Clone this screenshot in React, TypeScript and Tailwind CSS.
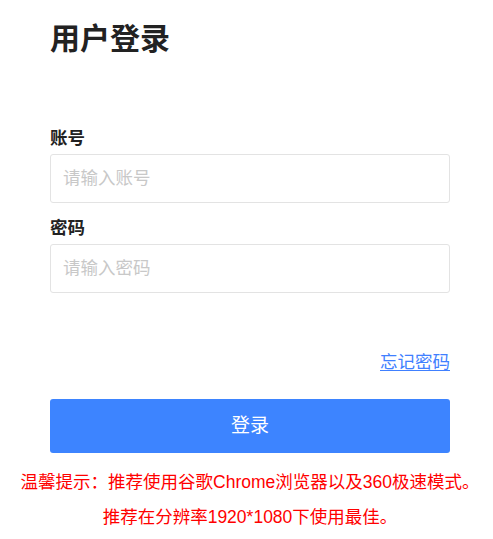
import React from "react";

const font = "font-['Liberation_Sans','Noto_Sans_CJK_SC',sans-serif]";

const App: React.FC = () => {
  return (
    <div className={`w-[493px] h-[539px] bg-white overflow-hidden ${font}`}>
      <div className="ml-[50px] w-[400px] pt-[19px]">
        <h1 className="text-[30px] leading-[40px] font-bold text-[#222]">用户登录</h1>

        <form className="mt-[67px]" onSubmit={(e) => e.preventDefault()}>
          <label className="block text-[17.5px] leading-[24px] font-bold text-[#222]">账号</label>
          <input
            type="text"
            placeholder="请输入账号"
            className="mt-[4px] block w-full h-[49px] rounded-[3px] border border-[#e3e3e3] px-[12px] text-[17.5px] text-[#333] placeholder:text-[#c8c8c8] outline-none"
          />

          <label className="mt-[13px] block text-[17.5px] leading-[24px] font-bold text-[#222]">密码</label>
          <input
            type="password"
            placeholder="请输入密码"
            className="mt-[4px] block w-full h-[49px] rounded-[3px] border border-[#e3e3e3] px-[12px] text-[17.5px] text-[#333] placeholder:text-[#c8c8c8] outline-none"
          />

          <div className="mt-[57px] flex justify-end">
            <a href="#" className="text-[17.5px] leading-[24px] text-[#4080ff] underline underline-offset-2">
              忘记密码
            </a>
          </div>

          <button
            type="submit"
            className="mt-[25px] block w-full h-[54px] rounded-[3px] bg-[#3d84ff] text-white text-[19px]"
          >
            登录
          </button>
        </form>
      </div>

      <div className="mt-[12px] ml-[18px] w-[464px] text-center text-[17.5px] leading-[35px] text-[#ff0000]">
        <p className="whitespace-nowrap">温馨提示：推荐使用谷歌Chrome浏览器以及360极速模式。</p>
        <p className="whitespace-nowrap">推荐在分辨率1920*1080下使用最佳。</p>
      </div>
    </div>
  );
};

export default App;
